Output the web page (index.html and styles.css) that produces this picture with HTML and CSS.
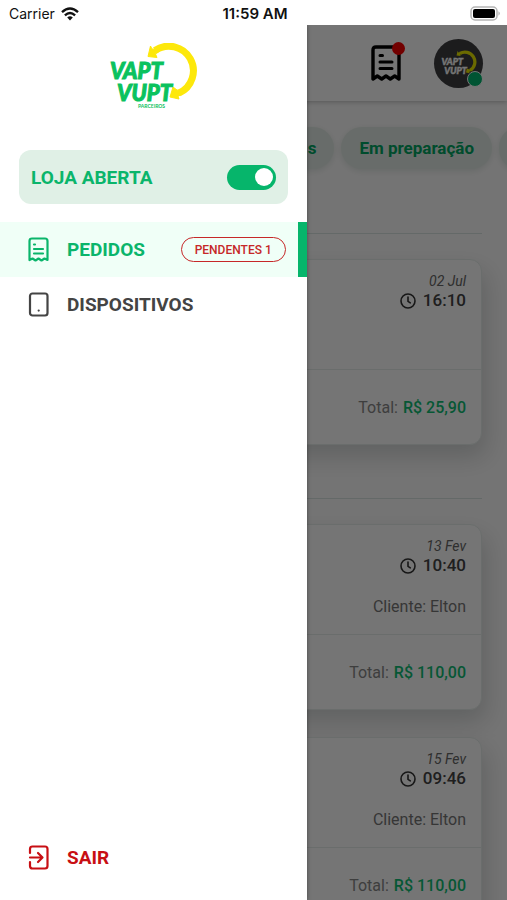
FILE: index.html
```html
<!DOCTYPE html>
<html lang="pt-BR">
<head>
<meta charset="utf-8">
<meta name="viewport" content="width=device-width, initial-scale=1">
<title>Vapt Vupt Parceiros</title>
<link rel="stylesheet" href="styles.css">
</head>
<body>
<div class="status">
  <div class="status-left">
    <span>Carrier</span>
    <svg width="18" height="14" viewBox="0 0 18 14" aria-hidden="true"><g fill="none" stroke="#111" stroke-width="2.4"><path d="M1 5.2Q9-2 17 5.2"/><path d="M3.9 8.3Q9 3.7 14.1 8.3"/></g><path d="M6.2 10.4Q9 8 11.8 10.4L9 13.4z" fill="#111"/></svg>
  </div>
  <strong class="status-time">11:59 AM</strong>
  <div class="status-right">
    <svg width="31" height="15" viewBox="0 0 31 15" aria-hidden="true"><rect x="1" y="1" width="26" height="13" rx="4" fill="#fff" stroke="#b5b5b5" stroke-width="1.5"/><rect x="3" y="3" width="22" height="9" rx="2"/><path d="M28.5 5.3Q31 7.5 28.5 9.7z" fill="#aaa"/></svg>
  </div>
</div>

<div class="stage">
  <div class="page">
    <header class="topbar">
      <button class="icon-button" type="button" aria-label="Pedidos">
        <svg width="30" height="37" viewBox="0 0 30 37" aria-hidden="true"><g fill="none" stroke="#000" stroke-width="3.4" stroke-linejoin="round" stroke-linecap="round"><path d="M2 34V5Q2 2 5 2H25Q28 2 28 5V34L23.7 31L19.3 34L15 31L10.7 34L6.3 31Z"/><path d="M9 10.5h2.5M9 17h12M9 23.5h12" stroke-width="3"/></g></svg>
        <span class="alert-dot"></span>
      </button>
      <button class="avatar" type="button" aria-label="Perfil">
        <svg width="36" height="27" viewBox="0 0 88 66" aria-hidden="true"><path d="M46 8.500A24 24 0 1 1 71 50" fill="none" stroke="#e9e600" stroke-width="8"/><path d="M40.500 2.500L38 13.500L48 14.500L46.500 10L52 7L43 6zM63 45L61 55L70 57L69 53.500L76 49L68 47z" fill="#e9e600"/><g class="mark mark-light"><text x="1" y="36">VAPT</text><text x="8" y="58">VUPT</text></g></svg>
        <span class="online-dot"></span>
      </button>
    </header>

    <div class="chips">
      <button class="chip" type="button">s</button>
      <button class="chip" type="button">Em preparação</button>
      <button class="chip chip-next" type="button" aria-label="Mais"></button>
    </div>

    <main class="orders">
      <hr>
      <article class="card">
        <div class="card-top">
          <em>02 Jul</em>
          <div class="time"><svg class="clock" viewBox="0 0 16 16" aria-hidden="true"><circle cx="8" cy="8" r="7"/><path d="M8 4v4.300l2.300 1.600"/></svg>16:10</div>
        </div>
        <div class="card-total">Total: <b>R$ 25,90</b></div>
      </article>
      <hr>
      <article class="card">
        <div class="card-top">
          <em>13 Fev</em>
          <div class="time"><svg class="clock" viewBox="0 0 16 16" aria-hidden="true"><circle cx="8" cy="8" r="7"/><path d="M8 4v4.300l2.300 1.600"/></svg>10:40</div>
          <div class="client">Cliente: Elton</div>
        </div>
        <div class="card-total">Total: <b>R$ 110,00</b></div>
      </article>
      <article class="card">
        <div class="card-top">
          <em>15 Fev</em>
          <div class="time"><svg class="clock" viewBox="0 0 16 16" aria-hidden="true"><circle cx="8" cy="8" r="7"/><path d="M8 4v4.300l2.300 1.600"/></svg>09:46</div>
          <div class="client">Cliente: Elton</div>
        </div>
        <div class="card-total">Total: <b>R$ 110,00</b></div>
      </article>
    </main>
  </div>

  <div class="scrim"></div>

  <aside class="drawer">
    <svg class="logo" width="88" height="66" viewBox="0 0 88 66" role="img" aria-label="Vapt Vupt Parceiros"><path d="M46 7.500A24.500 24.500 0 1 1 70 50" fill="none" stroke="#fde80b" stroke-width="7"/><path d="M41.500 3L39 13.500L48 14.500L46.500 11L52 7L43 6zM64 44L61 54L70 56L69 53.500L76 49L68 47z" fill="#fde80b" stroke="#fde80b" stroke-width="1"/><g class="mark"><text x="1" y="36">VAPT</text><text x="8" y="58">VUPT</text></g><text class="mark-sub" x="29" y="65">PARCEIROS</text></svg>

    <label class="store"><span>LOJA ABERTA</span><input class="switch" type="checkbox" role="switch" checked></label>

    <nav class="menu">
      <a class="item active" href="#pedidos">
        <svg width="21" height="25" viewBox="0 0 21 25" aria-hidden="true"><path d="M1.500 23V4Q1.500 1.500 4 1.500H17Q19.500 1.500 19.500 4V23L16.500 21.500L13.500 23.500L10.500 21.500L7.500 23.500L4.500 21.500Z"/><path d="M6 7.500h1M6 12h9M6 16.500h9"/></svg>
        <span>PEDIDOS</span>
        <span class="badge">PENDENTES 1</span>
      </a>
      <a class="item" href="#dispositivos">
        <svg width="21" height="25" viewBox="0 0 21 25" aria-hidden="true"><rect x="2" y="1.500" width="17.500" height="22" rx="2.500"/><path d="M10.700 18.500v.1"/></svg>
        <span>DISPOSITIVOS</span>
      </a>
      <a class="item exit" href="#sair">
        <svg width="21" height="25" viewBox="0 0 21 25" aria-hidden="true"><path d="M2 8V4Q2 1.500 4.500 1.500H17Q19.500 1.500 19.500 4V21Q19.500 23.500 17 23.500H4.500Q2 23.500 2 21V17"/><path d="M2 12.500H14M10 8L14.500 12.500L10 17"/></svg>
        <span>SAIR</span>
      </a>
    </nav>
  </aside>
</div>
</body>
</html>
```
FILE: styles.css
```css
* { box-sizing: border-box; }

body {
  margin: 0;
  height: 100vh;
  display: flex;
  flex-direction: column;
  overflow: hidden;
  background: #fff;
  font-family: Roboto, "Liberation Sans", sans-serif;
  color: #444;
}

button {
  border: 0;
  padding: 0;
  background: none;
  font: inherit;
}

.status {
  flex: none;
  height: 25px;
  padding: 2px 6px 0 9px;
  display: grid;
  grid-template-columns: 1fr auto 1fr;
  align-items: center;
  font-family: Inter, "Liberation Sans", sans-serif;
  font-size: 14px;
  color: #111;
}
.status-left { display: flex; align-items: center; gap: 6px; }
.status-time { font-size: 15px; font-weight: 600; }
.status-right { display: flex; justify-content: flex-end; }

.stage {
  position: relative;
  flex: 1;
  min-height: 0;
  overflow: hidden;
}

.page { background: #fdfdfd; }

.topbar {
  height: 76px;
  padding: 0 24px;
  display: flex;
  align-items: center;
  justify-content: flex-end;
  gap: 33px;
  background: #fff;
  box-shadow: 0 1px 5px rgba(0, 0, 0, .25);
}
.topbar svg { display: block; }
.icon-button { position: relative; }
.alert-dot {
  position: absolute;
  top: -3px;
  right: -4px;
  width: 13px;
  height: 13px;
  border-radius: 50%;
  background: #f80000;
}
.avatar {
  position: relative;
  width: 49px;
  height: 49px;
  display: grid;
  place-items: center;
  border-radius: 50%;
  background: #3d3d40;
}
.online-dot {
  position: absolute;
  right: 0;
  bottom: 1px;
  width: 16px;
  height: 16px;
  border: 1px solid #fff;
  border-radius: 50%;
  background: #00b870;
}

.mark {
  fill: #0ac25e;
  stroke: #0ac25e;
  stroke-width: 1;
  font-family: Lato, sans-serif;
  font-size: 22px;
  font-style: italic;
  font-weight: 900;
}
.mark-light { fill: #fff; stroke: #fff; }
.mark-sub {
  fill: #0ac25e;
  font-family: Lato, sans-serif;
  font-size: 5px;
  font-weight: 700;
}

.chips {
  margin: 26px -32px 0 0;
  display: flex;
  justify-content: flex-end;
  gap: 7px;
}
.chip {
  flex: none;
  height: 42px;
  padding: 0 18px;
  border-radius: 21px;
  background: #e2ece6;
  box-shadow: 0 2px 6px rgba(0, 60, 30, .12);
  color: #00a562;
  font-size: 17px;
  font-weight: 700;
}
.chip-next { width: 40px; }

.orders { padding: 39px 25px; }
.orders hr {
  margin: 25px 0;
  height: 1px;
  border: 0;
  background: #dbe4e2;
}
.card {
  margin-bottom: 27px;
  border: 1px solid #e6eeeb;
  border-radius: 12px;
  background: #fff;
  box-shadow: 4px 12px 24px rgba(0, 20, 15, .17);
}
.card + hr { margin-top: 53px; }
.card-top {
  height: 110px;
  padding: 12px 15px;
  display: flex;
  flex-direction: column;
  align-items: flex-end;
  border-bottom: 1px solid #e6eeeb;
  line-height: 19px;
}
.card-top em { font-size: 14px; color: #666; }
.time {
  display: flex;
  align-items: center;
  gap: 7px;
  font-size: 17px;
  font-weight: 500;
}
.clock {
  width: 16px;
  height: 16px;
  fill: none;
  stroke: #333;
  stroke-width: 1.6;
  stroke-linecap: round;
}
.client { margin-top: 22px; font-size: 16px; color: #777; }
.card-total {
  height: 74px;
  padding: 0 15px;
  display: flex;
  align-items: center;
  justify-content: flex-end;
  gap: 5px;
  font-size: 16px;
  color: #888;
}
.card-total b { font-weight: 500; color: #0fbe74; }

.scrim {
  position: absolute;
  inset: 0;
  background: rgba(0, 0, 0, .54);
}

.drawer {
  position: absolute;
  top: 0;
  bottom: 0;
  left: 0;
  width: 60.5%;
  padding-top: 18px;
  display: flex;
  flex-direction: column;
  background: #fff;
  box-shadow: 0 0 4px rgba(0, 0, 0, .4);
}
.logo { align-self: center; flex: none; }
.store {
  flex: none;
  height: 54px;
  margin: 41px 19px 18px;
  padding: 0 12px;
  display: flex;
  align-items: center;
  justify-content: space-between;
  border-radius: 12px;
  background: #e0f0e6;
  color: #0ab56b;
  font-size: 19px;
  font-weight: 700;
}
.switch {
  appearance: none;
  width: 49px;
  height: 25px;
  margin: 0;
  padding: 3px;
  display: flex;
  justify-content: flex-end;
  align-items: center;
  border-radius: 13px;
  background: #06b56b;
}
.switch::before {
  content: "";
  width: 18px;
  height: 18px;
  border-radius: 50%;
  background: #fff;
}

.menu {
  flex: 1;
  display: flex;
  flex-direction: column;
}
.item {
  height: 55px;
  padding: 0 12px 0 28px;
  display: flex;
  align-items: center;
  gap: 18px;
  color: #444;
  font-size: 19px;
  font-weight: 700;
  text-decoration: none;
}
.item svg {
  flex: none;
  fill: none;
  stroke: currentColor;
  stroke-width: 2.2;
  stroke-linecap: round;
  stroke-linejoin: round;
}
.active {
  border-right: 9px solid #06b56b;
  background: #f0fff7;
  color: #0ab56b;
}
.badge {
  height: 25px;
  margin-left: auto;
  padding: 0 13px;
  display: flex;
  align-items: center;
  border: 1px solid #c62828;
  border-radius: 13px;
  color: #c62828;
  font-size: 12px;
  font-weight: 500;
  white-space: nowrap;
}
.exit {
  margin-top: auto;
  margin-bottom: 15px;
  color: #c80f14;
}
```
